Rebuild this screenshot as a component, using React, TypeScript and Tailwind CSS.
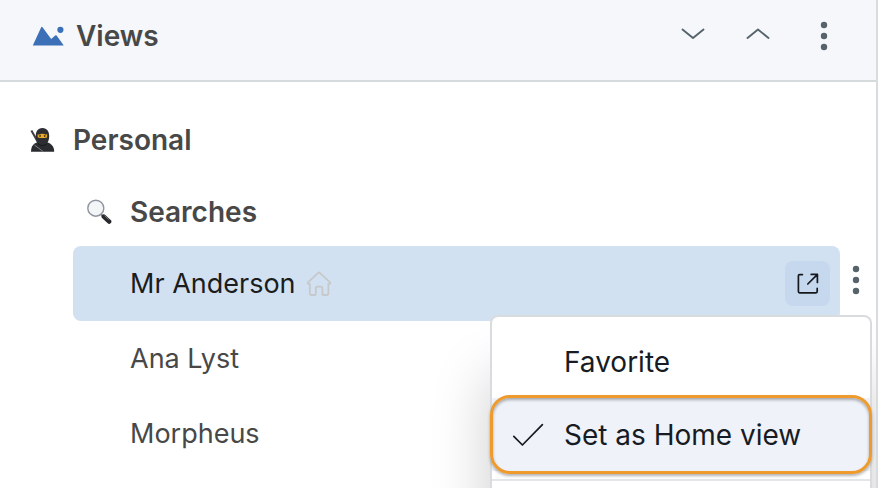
import React from "react"

const Dots = () => (
  <svg width="8" height="30" viewBox="0 0 8 30" fill="#57636b">
    <circle cx="4" cy="4" r="3.2" />
    <circle cx="4" cy="15" r="3.2" />
    <circle cx="4" cy="26" r="3.2" />
  </svg>
)

const Chevron = ({ d }: { d: string }) => (
  <svg
    width="24"
    height="12"
    viewBox="0 0 24 12"
    fill="none"
    stroke="#57636b"
    strokeWidth="1.9"
    strokeLinecap="round"
    strokeLinejoin="round"
  >
    <path d={d} />
  </svg>
)

const ViewsIcon = () => (
  <svg width="32" height="20" viewBox="0 0 32 20" fill="#3b70b7">
    <path d="M0.8 19.6 L9.2 1.2 Q9.8 0.4 10.5 1.2 L19.2 13 L23.2 9.4 Q24 8.8 24.6 9.6 L31.8 19.6 Z" />
    <circle cx="28.4" cy="3.8" r="3.1" />
  </svg>
)

const Ninja = () => (
  <svg width="26" height="26" viewBox="0 0 26 26">
    <path d="M2.4 3.6 L10 17" stroke="#3c3e42" strokeWidth="2" />
    <path
      d="M2 24.8 C2.2 19.5 3.8 17 8 15.6 L18.6 15.6 C22.8 17 25 19.5 25.2 24.8 Z"
      fill="#292b2f"
    />
    <path
      d="M13.4 1 C8.6 1 6.6 4.6 6.8 9.6 C7 14.6 9 18.6 13.4 18.6 C17.8 18.6 20 14.6 20.2 9.6 C20.4 4.6 18.2 1 13.4 1 Z"
      fill="#2c2e32"
    />
    <path
      d="M8.6 7.2 Q13.4 6.2 18.2 7.2 L18 10.4 Q13.4 11.6 8.8 10.4 Z"
      fill="#e9ad2c"
    />
    <path
      d="M9.4 7.6 L12 8.5 M17.4 7.6 L14.8 8.5"
      stroke="#3a2a12"
      strokeWidth="0.8"
    />
    <circle cx="11" cy="9.2" r="0.7" fill="#2b1c0b" />
    <circle cx="15.8" cy="9.2" r="0.7" fill="#2b1c0b" />
    <path d="M5.4 18 L14.2 24.6" stroke="#85888d" strokeWidth="0.9" />
    <path d="M9 16.6 Q13.4 20.4 18 16.6" stroke="#17181a" fill="none" />
  </svg>
)

const Magnifier = () => (
  <svg width="26" height="26" viewBox="0 0 26 26" fill="none">
    <path d="M14.6 15 L18 18.4" stroke="#7b8087" strokeWidth="2" />
    <path
      d="M17.8 17.6 L23.2 22.6"
      stroke="#28292c"
      strokeWidth="4.4"
      strokeLinecap="round"
    />
    <path d="M18.6 16.6 L22.8 20.6" stroke="#7f8286" strokeWidth="0.9" />
    <circle
      cx="9.8"
      cy="9.2"
      r="8"
      fill="#f3f5f7"
      stroke="#8d949d"
      strokeWidth="1.4"
    />
  </svg>
)

const Home = () => (
  <svg
    width="26"
    height="26"
    viewBox="0 0 26 26"
    fill="none"
    stroke="#c6c8ca"
    strokeWidth="1.8"
    strokeLinejoin="round"
    strokeLinecap="round"
  >
    <path d="M3.8 12.8 H2.6 Q1.2 12.4 2.2 11.2 L12.2 1.8 Q13 1.2 13.8 1.8 L23.8 11.2 Q24.8 12.4 23.4 12.8 H22.4 V22.6 Q22.4 24 21 24 H17.4 Q16.4 24 16.4 23 V17 Q16.4 15.6 15 15.6 H11.2 Q9.8 15.6 9.8 17 V23 Q9.8 24 8.8 24 H5.2 Q3.8 24 3.8 22.6 Z" />
  </svg>
)

const OpenIcon = () => (
  <svg
    width="22"
    height="22"
    viewBox="0 0 22 22"
    fill="none"
    stroke="#15191d"
    strokeWidth="1.7"
    strokeLinecap="round"
    strokeLinejoin="round"
  >
    <path d="M5.4 1.6 H2.6 Q1.4 1.6 1.4 2.8 V18.6 Q1.4 19.8 2.6 19.8 H19 Q20.2 19.8 20.2 18.6 V15.4" />
    <path d="M14.2 1.4 H20.4 V9.4 M20.2 1.6 L10.8 11" />
  </svg>
)

const Check = () => (
  <svg
    width="32"
    height="24"
    viewBox="0 0 32 24"
    fill="none"
    stroke="#15191d"
    strokeWidth="1.7"
    strokeLinecap="round"
    strokeLinejoin="round"
  >
    <path d="M1.8 13.4 L10.4 22 L30.4 1.6" />
  </svg>
)

const ViewMenu = () => (
  <div
    role="menu"
    className="absolute top-[69px] right-1 z-10 w-[382px] rounded-lg border-2 border-[#d9dcde] bg-white pt-2 text-[#171c24] shadow-[0_60px_60px_rgba(0,0,0,0.2)]"
  >
    <button
      role="menuitem"
      className="flex h-[73px] w-full items-center pl-[72px] text-left"
    >
      Favorite
    </button>
    <button
      role="menuitemcheckbox"
      aria-checked="true"
      className="relative flex h-[73px] w-full items-center gap-5 bg-[#eff2f8] pl-5 text-left"
    >
      <Check />
      Set as Home view
      <span className="absolute -inset-x-0.5 -inset-y-[3px] rounded-[20px] border-3 border-[#ee9a2d] shadow-[0_2px_3px_rgba(0,0,0,0.3),inset_0_2px_3px_rgba(0,0,0,0.3)]" />
    </button>
    <div className="mt-2 h-20 border-t-2 border-[#e3e5e8]" />
  </div>
)

const App = () => {
  return (
    <div className="h-screen overflow-hidden border-r-2 border-[#d9dcde] bg-white font-['Inter',sans-serif] text-[28px] leading-9 text-[#484848]">
      <header className="flex h-[82px] items-center border-b-2 border-[#d5dadd] bg-[#f5f7fb] pr-12 pb-2 pl-8">
        <ViewsIcon />
        <h1 className="ml-3 flex-1 font-semibold">Views</h1>
        <div className="flex items-center">
          <button aria-label="Expand all" className="mr-[41px] pb-1">
            <Chevron d="M1.5 1.5 L12 10 L22.5 1.5" />
          </button>
          <button aria-label="Collapse all" className="mr-[50px] pb-1">
            <Chevron d="M1.5 10 L12 1.5 L22.5 10" />
          </button>
          <button aria-label="Views menu">
            <Dots />
          </button>
        </div>
      </header>
      <main className="pt-5">
        <div className="flex h-[76px] items-center pl-[29px]">
          <Ninja />
          <h2 className="ml-[18px] font-semibold">Personal</h2>
        </div>
        <div className="flex h-[68px] items-center pl-[86px]">
          <Magnifier />
          <h3 className="ml-[18px] font-semibold">Searches</h3>
        </div>
        <ul className="pl-[73px] text-[27px]">
          <li className="relative flex h-[75px] items-center">
            <div className="flex h-full flex-1 items-center rounded-lg bg-[#d2e1f1] pr-2.5 pl-[57px] text-[#1c1c1c]">
              <a href="#mr-anderson">Mr Anderson</a>
              <span className="ml-2.5 flex-1">
                <Home />
              </span>
              <button
                aria-label="Open in new window"
                className="flex size-[45px] items-center justify-center rounded-lg bg-[#c6d8ed]"
              >
                <OpenIcon />
              </button>
            </div>
            <button
              aria-label="Mr Anderson options"
              className="flex w-9 justify-center pr-1 pb-2"
            >
              <Dots />
            </button>
            <div className="text-[28px]">
              <ViewMenu />
            </div>
          </li>
          <li className="flex h-[75px] items-center pl-[57px]">
            <a href="#ana-lyst">Ana Lyst</a>
          </li>
          <li className="flex h-[75px] items-center pl-[57px]">
            <a href="#morpheus">Morpheus</a>
          </li>
        </ul>
      </main>
    </div>
  )
}

export default App
